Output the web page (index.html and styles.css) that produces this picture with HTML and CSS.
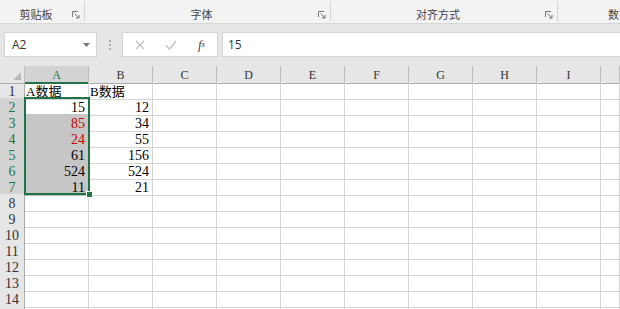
FILE: index.html
```html
<!DOCTYPE html>
<html lang="zh-CN">
<head>
    <meta charset="UTF-8"/>
    <title>工作簿 - 表格</title>
    <link rel="stylesheet" href="styles.css">
</head>
<body>
<div class="app">
    <!-- 功能区分组标签 -->
    <div class="ribbon">
        <div class="group g-clip">
            <span class="label">剪贴板</span>
            <svg class="launcher" width="8" height="8" viewBox="0 0 8 8"><path d="M0.5 6V0.5H6" fill="none" stroke="#777"/><path d="M2.5 2.5L7 7M4 7H7V4" fill="none" stroke="#777"/></svg>
        </div>
        <div class="group g-font">
            <span class="label">字体</span>
            <svg class="launcher" width="8" height="8" viewBox="0 0 8 8"><path d="M0.5 6V0.5H6" fill="none" stroke="#777"/><path d="M2.5 2.5L7 7M4 7H7V4" fill="none" stroke="#777"/></svg>
        </div>
        <div class="group g-align">
            <span class="label">对齐方式</span>
            <svg class="launcher" width="8" height="8" viewBox="0 0 8 8"><path d="M0.5 6V0.5H6" fill="none" stroke="#777"/><path d="M2.5 2.5L7 7M4 7H7V4" fill="none" stroke="#777"/></svg>
        </div>
        <div class="group g-num">
            <span class="label">数字</span>
        </div>
    </div>

    <!-- 编辑栏 -->
    <div class="formula-bar">
        <div class="name-box">
            <span>A2</span>
            <svg width="7" height="4" viewBox="0 0 7 4"><path d="M0 0H7L3.5 4Z" fill="#777"/></svg>
        </div>
        <div class="grip"><i></i><i></i><i></i></div>
        <div class="fx-box">
            <span class="btn">
                <svg width="10" height="10" viewBox="0 0 10 10"><path d="M1 1L9 9M9 1L1 9" stroke="#bdbdbd" stroke-width="1.2"/></svg>
            </span>
            <span class="btn">
                <svg width="12" height="10" viewBox="0 0 12 10"><path d="M1 5.5L4.5 9L11 1" fill="none" stroke="#bdbdbd" stroke-width="1.2"/></svg>
            </span>
            <span class="btn fx">f<sub>x</sub></span>
        </div>
        <div class="input">15</div>
    </div>

    <!-- 工作表 -->
    <div class="sheet">
        <div class="row head">
            <div class="corner"><span class="tri"></span></div>
            <div class="col sel">A</div>
            <div class="col">B</div>
            <div class="col">C</div>
            <div class="col">D</div>
            <div class="col">E</div>
            <div class="col">F</div>
            <div class="col">G</div>
            <div class="col">H</div>
            <div class="col">I</div>
            <div class="col"></div>
        </div>
        <div class="row">
            <div class="rh">1</div>
            <div class="c txt">A数据</div><div class="c txt">B数据</div>
            <div class="c"></div><div class="c"></div><div class="c"></div><div class="c"></div><div class="c"></div><div class="c"></div><div class="c"></div><div class="c"></div>
        </div>
        <div class="row">
            <div class="rh sel">2</div>
            <div class="c num">15</div><div class="c num">12</div>
            <div class="c"></div><div class="c"></div><div class="c"></div><div class="c"></div><div class="c"></div><div class="c"></div><div class="c"></div><div class="c"></div>
        </div>
        <div class="row">
            <div class="rh sel">3</div>
            <div class="c num hl red">85</div><div class="c num">34</div>
            <div class="c"></div><div class="c"></div><div class="c"></div><div class="c"></div><div class="c"></div><div class="c"></div><div class="c"></div><div class="c"></div>
        </div>
        <div class="row">
            <div class="rh sel">4</div>
            <div class="c num hl red">24</div><div class="c num">55</div>
            <div class="c"></div><div class="c"></div><div class="c"></div><div class="c"></div><div class="c"></div><div class="c"></div><div class="c"></div><div class="c"></div>
        </div>
        <div class="row">
            <div class="rh sel">5</div>
            <div class="c num hl">61</div><div class="c num">156</div>
            <div class="c"></div><div class="c"></div><div class="c"></div><div class="c"></div><div class="c"></div><div class="c"></div><div class="c"></div><div class="c"></div>
        </div>
        <div class="row">
            <div class="rh sel">6</div>
            <div class="c num hl">524</div><div class="c num">524</div>
            <div class="c"></div><div class="c"></div><div class="c"></div><div class="c"></div><div class="c"></div><div class="c"></div><div class="c"></div><div class="c"></div>
        </div>
        <div class="row">
            <div class="rh sel">7</div>
            <div class="c num hl">11</div><div class="c num">21</div>
            <div class="c"></div><div class="c"></div><div class="c"></div><div class="c"></div><div class="c"></div><div class="c"></div><div class="c"></div><div class="c"></div>
        </div>
        <div class="row"><div class="rh">8</div><div class="c"></div><div class="c"></div><div class="c"></div><div class="c"></div><div class="c"></div><div class="c"></div><div class="c"></div><div class="c"></div><div class="c"></div><div class="c"></div></div>
        <div class="row"><div class="rh">9</div><div class="c"></div><div class="c"></div><div class="c"></div><div class="c"></div><div class="c"></div><div class="c"></div><div class="c"></div><div class="c"></div><div class="c"></div><div class="c"></div></div>
        <div class="row"><div class="rh">10</div><div class="c"></div><div class="c"></div><div class="c"></div><div class="c"></div><div class="c"></div><div class="c"></div><div class="c"></div><div class="c"></div><div class="c"></div><div class="c"></div></div>
        <div class="row"><div class="rh">11</div><div class="c"></div><div class="c"></div><div class="c"></div><div class="c"></div><div class="c"></div><div class="c"></div><div class="c"></div><div class="c"></div><div class="c"></div><div class="c"></div></div>
        <div class="row"><div class="rh">12</div><div class="c"></div><div class="c"></div><div class="c"></div><div class="c"></div><div class="c"></div><div class="c"></div><div class="c"></div><div class="c"></div><div class="c"></div><div class="c"></div></div>
        <div class="row"><div class="rh">13</div><div class="c"></div><div class="c"></div><div class="c"></div><div class="c"></div><div class="c"></div><div class="c"></div><div class="c"></div><div class="c"></div><div class="c"></div><div class="c"></div></div>
        <div class="row"><div class="rh">14</div><div class="c"></div><div class="c"></div><div class="c"></div><div class="c"></div><div class="c"></div><div class="c"></div><div class="c"></div><div class="c"></div><div class="c"></div><div class="c"></div></div>
        <div class="row"><div class="rh"></div><div class="c"></div><div class="c"></div><div class="c"></div><div class="c"></div><div class="c"></div><div class="c"></div><div class="c"></div><div class="c"></div><div class="c"></div><div class="c"></div></div>

        <!-- 选区 A2:A7 -->
        <div class="selection"><span class="handle"></span></div>
    </div>
</div>
</body>
</html>
```

FILE: styles.css
```css
* {
    margin: 0;
    padding: 0;
    box-sizing: border-box;
}

body {
    width: 620px;
    height: 309px;
    overflow: hidden;
    background: #e6e6e6;
    font-family: "Liberation Sans", "Noto Sans CJK SC", sans-serif;
}

.app {
    width: 620px;
    height: 309px;
    overflow: hidden;
}

/* 功能区分组 */
.ribbon {
    display: flex;
    height: 24px;
    background: #f3f3f3;
    border-bottom: 1px solid #d8d8d8;
}

.group {
    display: flex;
    align-items: center;
    height: 20px;
    margin-top: 1px;
    border-right: 1px solid #d4d4d4;
}

.group .label {
    flex: 1;
    text-align: center;
    font-size: 11px;
    color: #444;
    font-family: "Noto Sans CJK SC", sans-serif;
    padding-top: 6px;
    white-space: nowrap;
}

.group .launcher {
    margin: 7px 4px 0 0;
}

.g-clip { width: 85px; }
.g-font { width: 246px; }
.g-align { width: 227px; }
.g-num { flex: 1; border-right: none; overflow: hidden; }
.g-num .label { text-align: left; padding-left: 50px; }

/* 编辑栏 */
.formula-bar {
    display: flex;
    height: 42px;
    padding: 8px 0 9px 4px;
    background: #e6e6e6;
}

.name-box {
    width: 93px;
    display: flex;
    align-items: center;
    justify-content: space-between;
    padding: 0 6px 0 7px;
    background: #fff;
    border: 1px solid #d4d4d4;
    font-size: 12px;
    color: #333;
    font-family: "Open Sans", sans-serif;
}

.grip {
    width: 25px;
    display: flex;
    flex-direction: column;
    align-items: center;
    justify-content: center;
    gap: 2px;
}

.grip i {
    width: 2px;
    height: 2px;
    background: #b0b0b0;
}

.fx-box {
    width: 96px;
    display: flex;
    align-items: center;
    background: #fff;
    border: 1px solid #d4d4d4;
    padding-left: 1px;
}

.fx-box .btn {
    width: 31px;
    display: flex;
    justify-content: center;
    align-items: center;
}

.fx-box .fx {
    font-family: "Liberation Serif", serif;
    font-style: italic;
    font-size: 13px;
    color: #444;
}

.fx-box .fx sub {
    font-size: 8px;
    vertical-align: -1px;
}

.input {
    flex: 1;
    margin-left: 4px;
    background: #fff;
    border: 1px solid #d4d4d4;
    border-right: none;
    padding: 3px 0 0 5px;
    font-size: 12px;
    color: #333;
    font-family: "Open Sans", sans-serif;
}

/* 工作表网格 */
.sheet {
    position: relative;
    background: #fff;
}

.row {
    display: grid;
    grid-template-columns: 25px repeat(9, 64px) 1fr;
    height: 16px;
}

.head .corner,
.head .col {
    background: #e6e6e6;
    border-right: 1px solid #bdbdbd;
    border-bottom: 1px solid #ababab;
    font-family: "Liberation Serif", serif;
    font-size: 12px;
    color: #333;
    text-align: center;
    line-height: 14px;
    padding-top: 2px;
}

.head .corner {
    position: relative;
}

.corner .tri {
    position: absolute;
    right: 3px;
    bottom: 3px;
    border-left: 8px solid transparent;
    border-bottom: 8px solid #b9b9b9;
}

.head .col.sel {
    background: #d3d3d3;
    color: #217346;
    border-bottom: 2px solid #217346;
}

.rh {
    background: #e6e6e6;
    border-right: 1px solid #ababab;
    border-bottom: 1px solid #d0d0d0;
    font-family: "Liberation Serif", serif;
    font-size: 14px;
    color: #333;
    text-align: center;
    line-height: 15px;
    padding-top: 2px;
}

.rh.sel {
    background: #d3d3d3;
    color: #217346;
}

.c {
    border-right: 1px solid #d4d4d4;
    border-bottom: 1px solid #d4d4d4;
    font-family: "Liberation Serif", "Noto Sans CJK SC", serif;
    font-size: 14px;
    line-height: 15px;
    padding-top: 2px;
    color: #000;
    white-space: nowrap;
    overflow: visible;
}

.c.txt {
    padding-left: 1px;
    font-size: 13px;
}

.c.num {
    text-align: right;
    padding-right: 3px;
}

.c.hl {
    background: #c6c6c6;
    border-bottom-color: #bcbcbc;
}

.c.red {
    color: #c00000;
}

.selection {
    position: absolute;
    left: 24px;
    top: 31px;
    width: 66px;
    height: 98px;
    border: 2px solid #217346;
    pointer-events: none;
}

.selection .handle {
    position: absolute;
    right: -5px;
    bottom: -5px;
    width: 7px;
    height: 7px;
    background: #217346;
    border: 1px solid #fff;
}
```
